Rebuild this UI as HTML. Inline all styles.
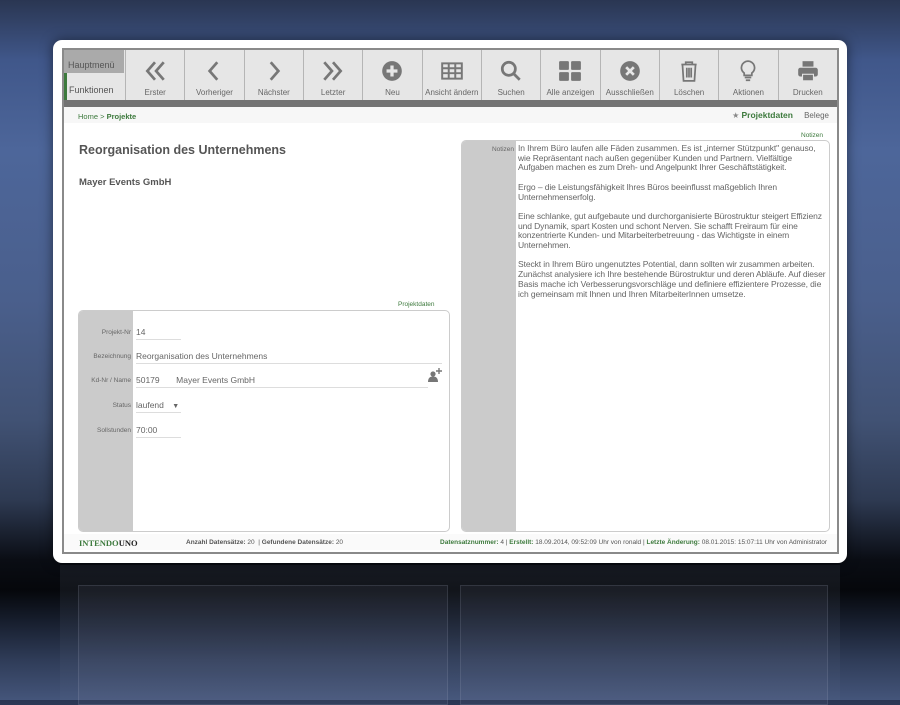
<!DOCTYPE html>
<html><head><meta charset="utf-8"><style>
*{margin:0;padding:0;box-sizing:border-box}
body{width:900px;height:700px;overflow:hidden;font-family:"Liberation Sans",sans-serif;position:relative;
background:linear-gradient(180deg,#2a3652 0px,#40578a 60px,#4d669a 150px,#4a5f8c 300px,#415274 420px,#2e3a52 500px,#0a0d14 560px,#05070b 590px,#161d2c 620px,#2f3c58 660px,#44557a 700px);}
.ref{position:absolute;left:60px;top:565px;width:780px;height:135px;background:linear-gradient(180deg,rgba(120,130,150,.12),rgba(120,135,165,.06));}
.card{position:absolute;left:53px;top:40px;width:794px;height:523px;background:#fff;border-radius:9px;box-shadow:0 0 12px rgba(0,0,0,.5)}
.frame{position:absolute;left:62px;top:48px;width:777px;height:506px;border:2px solid #8a8a8a;background:#fff}
.tb{position:absolute;left:0;top:0;width:773px;height:50px;background:#e6e6e6;display:flex}
.hm{width:61px;height:50px;position:relative;border-left:3px solid #3d7a3d}
.hm .a{position:absolute;left:-3px;top:0;width:60px;height:23px;background:#aaa;color:#555;font-size:9px;padding:10px 0 0 4px}
.hm .b{position:absolute;left:2px;top:35px;color:#555;font-size:9px}
.bt{flex:1;border-left:1px solid #b5b5b5;height:50px;position:relative;text-align:center;color:#666;font-size:8px}
.bt svg{position:absolute;left:50%;top:9px;margin-left:-12px}
.bt span{position:absolute;left:0;right:0;top:38px}
.dk{position:absolute;left:0;top:50px;width:773px;height:7px;background:#737373}
.bc{position:absolute;left:0;top:57px;width:773px;height:16px;background:#f7f7f7;font-size:7.5px;color:#3d7a3d;padding:5px 0 0 14px}
.tabs{position:absolute;right:8px;top:60px;font-size:8px;color:#666}
.t{position:absolute;font-size:8px;color:#666}
h1{position:absolute;left:15px;top:93px;font-size:12.5px;color:#555}
h2{position:absolute;left:15px;top:127px;font-size:9.5px;color:#555}
.box{position:absolute;border:1px solid #ccc;border-radius:5px;background:#fff;overflow:hidden}
.gc{position:absolute;left:0;top:0;bottom:0;width:54px;background:#cbcbcb}
.lab{position:absolute;width:52px;text-align:right;font-size:6.5px;color:#666}
.val{position:absolute;left:57px;font-size:8.5px;color:#666;border-bottom:1px solid #ddd;padding-bottom:2px}
.notes{position:absolute;left:56px;top:3px;width:310px;font-size:8.5px;color:#666;line-height:9.7px;letter-spacing:-0.1px}
.notes p{margin-bottom:9.7px}
.ft{position:absolute;left:0;top:484px;width:773px;height:16px;background:#fafafa;font-size:6.5px;color:#555}
.g{color:#3d7a3d;font-weight:bold}
</style></head><body>
<div class="ref">
 <div style="position:absolute;left:18px;top:20px;width:370px;height:120px;border:1px solid rgba(180,190,210,.15);background:rgba(150,160,180,.07)"></div>
 <div style="position:absolute;left:400px;top:20px;width:368px;height:120px;border:1px solid rgba(180,190,210,.15);background:rgba(150,160,180,.07)"></div>
</div>
<div class="card"></div>
<div class="frame">
 <div class="tb">
  <div class="hm"><div class="a">Hauptmenü</div><div class="b">Funktionen</div></div>
  <div class="bt"><svg width="24" height="24" viewBox="0 0 22 22" fill="none" stroke="#777" stroke-width="2.5"><path d="M11 3 4 11l7 8M19 3l-7 8 7 8"/></svg><span>Erster</span></div>
  <div class="bt"><svg width="24" height="24" viewBox="0 0 22 22" fill="none" stroke="#777" stroke-width="2.5"><path d="M14 3 7 11l7 8"/></svg><span>Vorheriger</span></div>
  <div class="bt"><svg width="24" height="24" viewBox="0 0 22 22" fill="none" stroke="#777" stroke-width="2.5"><path d="M8 3l7 8-7 8"/></svg><span>Nächster</span></div>
  <div class="bt"><svg width="24" height="24" viewBox="0 0 22 22" fill="none" stroke="#777" stroke-width="2.5"><path d="M3 3l7 8-7 8M11 3l7 8-7 8"/></svg><span>Letzter</span></div>
  <div class="bt"><svg width="24" height="24" viewBox="0 0 22 22"><circle cx="11" cy="11" r="9" fill="#777"/><path d="M11 6v10M6 11h10" stroke="#e6e6e6" stroke-width="3"/></svg><span>Neu</span></div>
  <div class="bt"><svg width="24" height="24" viewBox="0 0 22 22" fill="none" stroke="#777" stroke-width="1.8"><rect x="2" y="4" width="18" height="14"/><path d="M2 8.5h18M2 13h18M8 4v14M14 4v14"/></svg><span>Ansicht ändern</span></div>
  <div class="bt"><svg width="24" height="24" viewBox="0 0 22 22" fill="none" stroke="#777" stroke-width="2.5"><circle cx="9" cy="9" r="6"/><path d="M13.5 13.5 19 19"/></svg><span>Suchen</span></div>
  <div class="bt"><svg width="24" height="24" viewBox="0 0 22 22" fill="#777"><rect x="1" y="2" width="9" height="8" rx="1"/><rect x="12" y="2" width="9" height="8" rx="1"/><rect x="1" y="12" width="9" height="8" rx="1"/><rect x="12" y="12" width="9" height="8" rx="1"/></svg><span>Alle anzeigen</span></div>
  <div class="bt"><svg width="24" height="24" viewBox="0 0 22 22"><circle cx="11" cy="11" r="9" fill="#777"/><path d="M7.5 7.5l7 7M14.5 7.5l-7 7" stroke="#e6e6e6" stroke-width="2.5"/></svg><span>Ausschließen</span></div>
  <div class="bt"><svg width="24" height="24" viewBox="0 0 22 22" fill="none" stroke="#777" stroke-width="1.6"><path d="M4 5h14M8 5V3h6v2M5 5l1 15h10l1-15M9 8v9M11 8v9M13 8v9"/></svg><span>Löschen</span></div>
  <div class="bt"><svg width="24" height="24" viewBox="0 0 22 22" fill="none" stroke="#777" stroke-width="1.6"><path d="M11 2a6 6 0 0 0-3.5 10.9V15h7v-2.1A6 6 0 0 0 11 2zM8 17h6M9 19.5h4"/></svg><span>Aktionen</span></div>
  <div class="bt"><svg width="24" height="24" viewBox="0 0 22 22" fill="#777"><rect x="6" y="2" width="10" height="5"/><rect x="2" y="8" width="18" height="8" rx="2"/><rect x="6" y="14" width="10" height="6" fill="#777" stroke="#e6e6e6" stroke-width="1"/></svg><span>Drucken</span></div>
 </div>
 <div class="dk"></div>
 <div class="bc">Home &gt; <b>Projekte</b></div>
 <div class="tabs"><span style="color:#888">★</span> <b style="color:#3d7a3d;font-size:8.5px">Projektdaten</b> &nbsp;&nbsp;&nbsp;&nbsp;Belege</div>
 <h1>Reorganisation des Unternehmens</h1>
 <h2>Mayer Events GmbH</h2>
 <div class="t" style="left:334px;top:251px;color:#3d7a3d;font-size:6.5px">Projektdaten</div>
 <div class="t" style="left:737px;top:82px;color:#3d7a3d;font-size:6.5px">Notizen</div>
 <div class="box" style="left:14px;top:260px;width:372px;height:222px">
  <div class="gc"></div>
  <div class="lab" style="top:18px">Projekt-Nr</div><div class="val" style="top:16px;width:45px">14</div>
  <div class="lab" style="top:42px">Bezeichnung</div><div class="val" style="top:40px;width:306px">Reorganisation des Unternehmens</div>
  <div class="lab" style="top:66px">Kd-Nr / Name</div><div class="val" style="top:64px;width:292px">50179 &nbsp;&nbsp;&nbsp;&nbsp;&nbsp;&nbsp;Mayer Events GmbH</div>
  <svg style="position:absolute;left:349px;top:57px" width="14" height="14" viewBox="0 0 14 14" fill="#777"><circle cx="5" cy="6" r="2.6"/><path d="M0 14c0-4 2-5.5 5-5.5s5 1.5 5 5.5z"/><path d="M11 0v6M8 3h6" stroke="#777" stroke-width="1.4"/></svg>
  <div class="lab" style="top:91px">Status</div><div class="val" style="top:89px;width:45px">laufend <span style="font-size:7px;margin-left:6px">▼</span></div>
  <div class="lab" style="top:116px">Sollstunden</div><div class="val" style="top:114px;width:45px">70:00</div>
 </div>
 <div class="box" style="left:397px;top:90px;width:369px;height:392px">
  <div class="gc"></div>
  <div class="lab" style="top:5px">Notizen</div>
  <div class="notes">
   <p>In Ihrem Büro laufen alle Fäden zusammen. Es ist „interner Stützpunkt" genauso, wie Repräsentant nach außen gegenüber Kunden und Partnern. Vielfältige Aufgaben machen es zum Dreh- und Angelpunkt Ihrer Geschäftstätigkeit.</p>
   <p>Ergo – die Leistungsfähigkeit Ihres Büros beeinflusst maßgeblich Ihren Unternehmenserfolg.</p>
   <p>Eine schlanke, gut aufgebaute und durchorganisierte Bürostruktur steigert Effizienz und Dynamik, spart Kosten und schont Nerven. Sie schafft Freiraum für eine konzentrierte Kunden- und Mitarbeiterbetreuung - das Wichtigste in einem Unternehmen.</p>
   <p>Steckt in Ihrem Büro ungenutztes Potential, dann sollten wir zusammen arbeiten. Zunächst analysiere ich Ihre bestehende Bürostruktur und deren Abläufe. Auf dieser Basis mache ich Verbesserungsvorschläge und definiere effizientere Prozesse, die ich gemeinsam mit Ihnen und Ihren MitarbeiterInnen umsetze.</p>
  </div>
 </div>
 <div class="ft">
  <span style="position:absolute;left:15px;top:4px;font-family:'Liberation Serif',serif;font-size:8.5px;font-weight:bold;color:#3d7a3d">INTENDO<span style="color:#222">UNO</span></span>
  <span style="position:absolute;left:122px;top:5px"><b>Anzahl Datensätze:</b> 20 &nbsp;| <b>Gefundene Datensätze:</b> 20</span>
  <span style="position:absolute;right:10px;top:5px"><span class="g">Datensatznummer:</span> 4 | <span class="g">Erstellt:</span> 18.09.2014, 09:52:09 Uhr von ronald | <span class="g">Letzte Änderung:</span> 08.01.2015: 15:07:11 Uhr von Administrator</span>
 </div>
</div>
</body></html>
